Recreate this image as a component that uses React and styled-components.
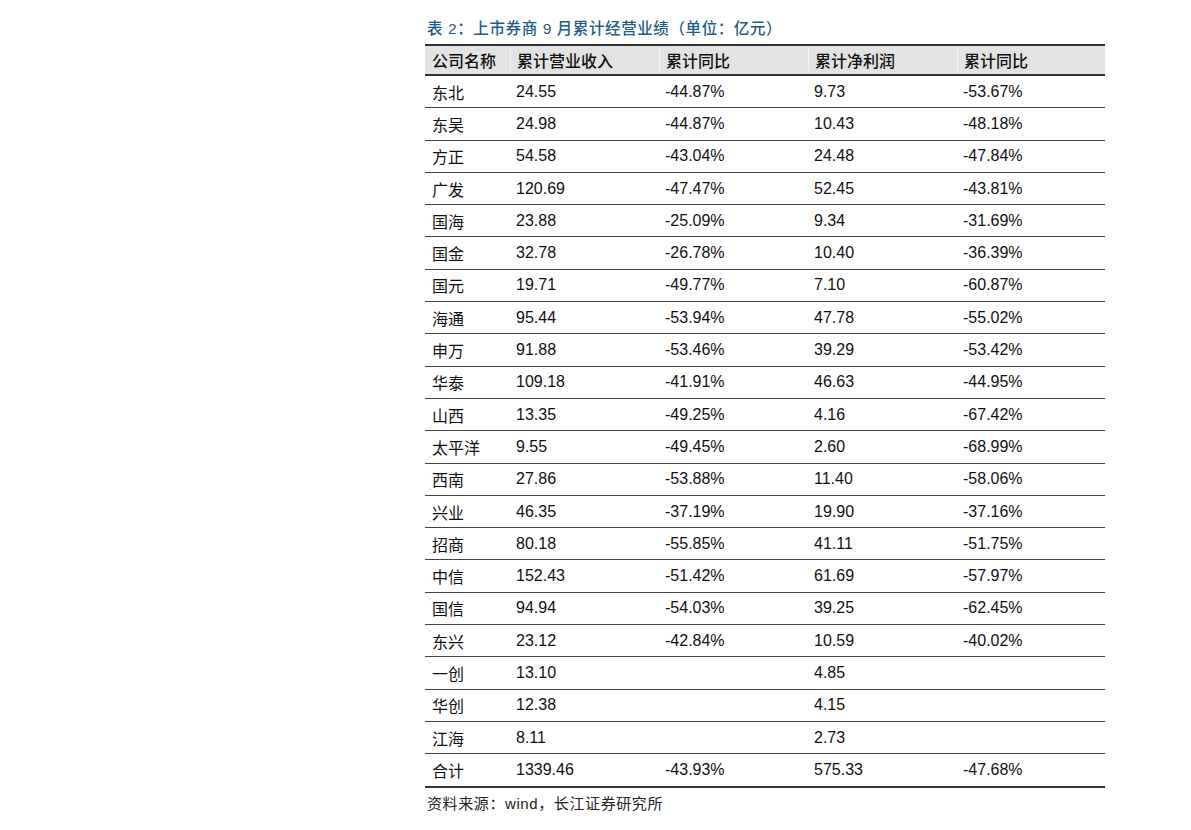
import React from 'react';
import styled, { createGlobalStyle } from 'styled-components';

const GlobalStyle = createGlobalStyle`
  html, body {
    margin: 0;
    padding: 0;
    background: #fff;
  }
  body {
    font-family: "Liberation Sans", "Noto Sans CJK SC", sans-serif;
    color: #111;
  }
`;

const Page = styled.div`
  width: 1191px;
  height: 830px;
  padding: 18px 0 0 425px;
  box-sizing: border-box;
`;

const Title = styled.div`
  color: #1d5d8e;
  font-size: 15.5px;
  font-weight: 500;
  line-height: 22px;
  padding-left: 2px;
  margin-bottom: 4px;
  letter-spacing: 0.6px;
`;

const Table = styled.div`
  width: 680px;
  border-top: 2px solid #333;
  border-bottom: 1px solid #333;
`;

const Row = styled.div`
  display: grid;
  grid-template-columns: 85px 149px 149px 149px 148px;
  height: ${p => (p.$head ? '30px' : '32.3px')};
  box-sizing: border-box;
  background: ${p => (p.$head ? '#e3e3e3' : '#fff')};
  border-bottom: ${p => (p.$head ? '2px solid #333' : '1px solid #444')};
  font-weight: ${p => (p.$head ? 500 : 400)};
  &:last-child {
    border-bottom: 1px solid #333;
  }
`;

const Cell = styled.div`
  display: flex;
  align-items: center;
  padding-left: ${p => (p.$first ? '7px' : '6px')};
  font-size: 16px;
  white-space: nowrap;
  border-left: ${p => (p.$first ? 'none' : p.$head ? '1px solid #f2f2f2' : 'none')};
`;

const Source = styled.div`
  font-size: 15px;
  letter-spacing: 0.6px;
  color: #222;
  padding: 4px 0 0 2px;
`;

const headers = ['公司名称', '累计营业收入', '累计同比', '累计净利润', '累计同比'];

const rows = [
  ['东北', '24.55', '-44.87%', '9.73', '-53.67%'],
  ['东吴', '24.98', '-44.87%', '10.43', '-48.18%'],
  ['方正', '54.58', '-43.04%', '24.48', '-47.84%'],
  ['广发', '120.69', '-47.47%', '52.45', '-43.81%'],
  ['国海', '23.88', '-25.09%', '9.34', '-31.69%'],
  ['国金', '32.78', '-26.78%', '10.40', '-36.39%'],
  ['国元', '19.71', '-49.77%', '7.10', '-60.87%'],
  ['海通', '95.44', '-53.94%', '47.78', '-55.02%'],
  ['申万', '91.88', '-53.46%', '39.29', '-53.42%'],
  ['华泰', '109.18', '-41.91%', '46.63', '-44.95%'],
  ['山西', '13.35', '-49.25%', '4.16', '-67.42%'],
  ['太平洋', '9.55', '-49.45%', '2.60', '-68.99%'],
  ['西南', '27.86', '-53.88%', '11.40', '-58.06%'],
  ['兴业', '46.35', '-37.19%', '19.90', '-37.16%'],
  ['招商', '80.18', '-55.85%', '41.11', '-51.75%'],
  ['中信', '152.43', '-51.42%', '61.69', '-57.97%'],
  ['国信', '94.94', '-54.03%', '39.25', '-62.45%'],
  ['东兴', '23.12', '-42.84%', '10.59', '-40.02%'],
  ['一创', '13.10', '', '4.85', ''],
  ['华创', '12.38', '', '4.15', ''],
  ['江海', '8.11', '', '2.73', ''],
  ['合计', '1339.46', '-43.93%', '575.33', '-47.68%'],
];

export default function App() {
  return (
    <>
      <GlobalStyle />
      <Page>
        <Title>表 2：上市券商 9 月累计经营业绩（单位：亿元）</Title>
        <Table>
          <Row $head>
            {headers.map((h, i) => (
              <Cell key={i} $head $first={i === 0}>{h}</Cell>
            ))}
          </Row>
          {rows.map((r, ri) => (
            <Row key={ri}>
              {r.map((c, ci) => (
                <Cell key={ci} $first={ci === 0}>{c}</Cell>
              ))}
            </Row>
          ))}
        </Table>
        <Source>资料来源：wind，长江证券研究所</Source>
      </Page>
    </>
  );
}
